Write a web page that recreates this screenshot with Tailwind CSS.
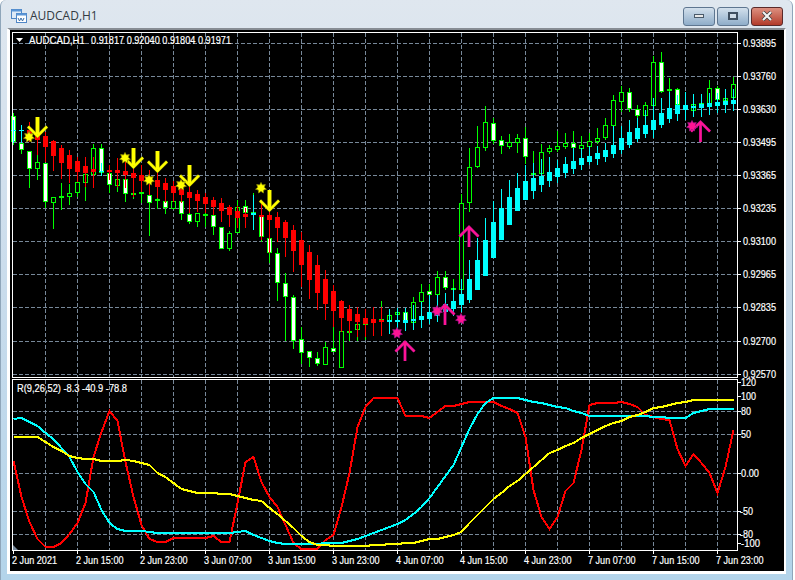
<!DOCTYPE html>
<html lang="en">
<head>
    <meta charset="UTF-8">
    <title>AUDCAD,H1</title>
    <script src="https://cdn.jsdelivr.net/npm/@tailwindcss/browser@4"></script>
</head>
<body class="bg-white overflow-hidden">
    <div class="w-[793px] h-[580px] flex flex-col rounded-t-md bg-gradient-to-b from-[#dfe7ef] via-[#c9dcec] to-[#b3d4ea] border-l border-r border-[#8fa6ba]">
        <div class="h-[28px] flex items-center shrink-0 pl-[10px] pt-[4px]">
            <svg width="16" height="16" viewBox="0 0 16 16" class="shrink-0">
                <rect x="0.5" y="1.5" width="10" height="9" fill="#dfeaf6" stroke="#4f86c6"/>
                <rect x="0.5" y="1.5" width="10" height="2" fill="#5b95d6"/>
                <rect x="5.5" y="5.5" width="10" height="9" fill="#ffffff" stroke="#4f86c6"/>
                <rect x="5.5" y="5.5" width="10" height="2" fill="#5b95d6"/>
                <path d="M7 10 l1.5 3 l1.5 -3 l1.5 3 l1.5 -3" fill="none" stroke="#3a6ea8" stroke-width="1"/>
            </svg>
            <span class="ml-[3px] text-[12px] text-[#333a42] font-['Open_Sans',sans-serif]">AUDCAD,H1</span>
            <div class="ml-auto flex gap-[2px] mr-[9px]">
                <div class="w-[32px] h-[19px] rounded-[3px] border border-[#5e7690] bg-gradient-to-b from-[#d3e0ec] to-[#8fadc9] flex items-center justify-center">
                    <div class="w-[10px] h-[4px] bg-[#e8e8e8] border border-[#4a5a6a]"></div>
                </div>
                <div class="w-[32px] h-[19px] rounded-[3px] border border-[#5e7690] bg-gradient-to-b from-[#d3e0ec] to-[#8fadc9] flex items-center justify-center">
                    <div class="w-[10px] h-[8px] border-2 border-[#3f4f60] bg-[#cfdbe6]"></div>
                </div>
                <div class="w-[32px] h-[19px] rounded-[3px] border border-[#5a2a2a] bg-gradient-to-b from-[#dc8f80] to-[#b23a2a] flex items-center justify-center">
                    <svg width="12" height="10" viewBox="0 0 12 10"><path d="M2 1 L10 9 M10 1 L2 9" stroke="#3b3b3b" stroke-width="3.6"/><path d="M2 1 L10 9 M10 1 L2 9" stroke="#f2f2f2" stroke-width="2.2"/></svg>
                </div>
            </div>
        </div>
        <div class="ml-[6px] mr-[6px] border-t-2 border-t-[#878d94] border-l-[3px] border-r-2 border-b-[3px] border-l-white border-r-white border-b-white bg-black shrink-0 w-[779px] h-[546px]">
            <svg id="chart" width="774" height="541" viewBox="10 30 774 541" class="block font-['Liberation_Sans',sans-serif] text-[11px] fill-white"></svg>
        </div>
    </div>
    <script>
        const svg = document.getElementById("chart");
        const NS = "http://www.w3.org/2000/svg";

        function add(tag, attrs, text) {
            const el = document.createElementNS(NS, tag);
            for (const k in attrs) el.setAttribute(k, attrs[k]);
            if (text) el.textContent = text;
            svg.appendChild(el);
            return el;
        }
        function box(x, y, w, h, fill) {
            add("rect", { x: x, y: y, width: w, height: h, fill: fill, "shape-rendering": "crispEdges" });
        }
        function label(x, y, len, str) {
            add("text", { x: x, y: y, textLength: len, lengthAdjust: "spacingAndGlyphs", stroke: "#ffffff", "stroke-width": 0.2 }, str);
        }
        const px = n => 13.5 + 8 * n;

        // grid
        const GRID = "#778899";
        const gridTop = [43, 76, 109, 142, 175, 208, 241, 274, 307, 341, 374];
        const gridLow = [411, 434, 473, 511, 534];
        function hline(y) {
            add("line", { x1: 13, x2: 737, y1: y + 0.5, y2: y + 0.5, stroke: GRID, "stroke-dasharray": "4 2", "shape-rendering": "crispEdges" });
        }
        function vline(x, y1, y2) {
            add("line", { x1: x, x2: x, y1: y1, y2: y2, stroke: GRID, "stroke-dasharray": "4 2", "shape-rendering": "crispEdges" });
        }
        gridTop.forEach(hline);
        gridLow.forEach(hline);
        for (let x = 45.5; x < 737; x += 32) {
            vline(x, 33, 377);
            vline(x, 380, 550);
        }

        // price candles: wick top, wick bottom, body top, body bottom, type (0 hollow, 1 white, 2 doji)
        const candles = [
            [113,145,116,142,1],[142,154,143,150,1],[151,188,151,169,1],[155,180,162,169,0],[163,208,163,202,1],
            [197,229,197,203,0],[183,210,196,198,0],[184,205,193,197,0],[182,197,182,193,0],[174,201,174,183,0],
            [144,175,148,175,0],[144,176,148,173,1],[168,193,173,185,1],[179,192,179,186,0],[179,202,179,194,1],
            [188,199,193,195,2],[168,203,192,194,2],[193,236,195,203,1],[196,209,199,201,2],[199,214,201,208,1],
            [198,209,201,209,0],[199,220,201,214,1],[212,224,214,222,1],[213,227,213,222,0],[193,227,214,216,1],
            [215,235,215,227,1],[227,249,227,249,1],[231,251,233,249,0],[200,233,207,233,0],[200,213,206,213,1],
            [193,230,212,215,1],[214,242,216,237,1],[236,263,238,253,1],[248,301,253,283,1],[273,341,283,297,1],
            [295,349,297,341,1],[327,364,339,353,1],[351,367,351,358,1],[352,366,358,364,1],[342,365,347,365,0],
            [327,352,348,352,1],[331,368,331,368,0],[331,341,331,333,2],[324,341,324,330,0],[310,340,323,325,2],
            [315,336,320,322,2],[301,328,319,322,0],[315,321,315,321,0],[312,320,312,315,0],[312,323,312,323,1],
            [297,323,302,323,0],[284,302,292,302,0],[284,295,291,295,1],[271,295,277,295,0],[271,290,277,288,1],
            [279,300,288,290,2],[194,296,203,290,0],[148,212,167,203,0],[126,168,147,167,0],[106,151,122,148,0],
            [118,144,123,141,1],[136,154,140,146,1],[134,149,142,147,0],[134,153,138,143,0],[127,164,138,157,1],
            [151,199,173,175,2],[144,176,152,174,0],[145,154,148,152,0],[131,152,146,150,0],[133,149,143,147,0],
            [131,150,143,148,1],[136,151,145,149,0],[133,149,141,147,0],[128,144,138,142,0],[118,140,125,138,0],
            [95,128,100,126,0],[86,112,92,102,0],[88,112,92,109,1],[105,118,109,116,1],[102,118,105,116,0],
            [56,108,62,106,0],[52,93,62,92,1],[78,100,89,91,2],[88,106,89,105,1],[100,110,105,107,2],
            [94,113,104,111,0],[100,108,103,105,2],[80,105,88,104,0],[86,102,88,100,1],[92,103,98,101,0],
            [77,100,84,98,0]
        ];
        candles.forEach((c, i) => {
            const x = px(i);
            box(x - 0.5, c[0], 1, c[1] - c[0], "#00ff00");
            if (c[4] === 2) { box(x - 2.5, c[2], 5, 2, "#00ff00"); return; }
            box(x - 2.5, c[2], 5, c[3] - c[2], "#00ff00");
            box(x - 1.5, c[2] + 1, 3, c[3] - c[2] - 2, c[4] === 1 ? "#ffffff" : "#000000");
        });

        // indicator candles: wick top, wick bottom, body top, body bottom
        const trend = [
            [120,143,130,131,"c"],[125,143,130,131,"c"],[122,142,130,140],[128,155,132,140],[132,162,136,147],
            [140,171,141,156],[145,179,148,163],[150,183,155,169],[157,182,161,172],[157,187,166,173],
            [157,188,169,172],[163,176,171,172,"c"],[165,180,170,172],[158,187,170,173],[160,188,171,175],
            [165,197,173,178],[165,192,175,181],[170,195,177,183],[171,198,180,187],[178,203,183,190],
            [181,202,186,193],[180,203,189,195],[187,213,192,198],[190,212,194,201],[193,213,197,204],
            [197,215,200,207],[198,222,203,211],[205,227,207,215],[206,228,211,218],[208,228,214,217],
            [195,230,213,215,"c"],[203,240,215,217],[210,253,215,220],[212,242,217,228],[220,257,222,238],
            [225,272,230,251],[232,287,240,265],[245,299,252,280],[255,310,265,293],[270,320,279,304],
            [285,327,291,311],[300,332,301,318],[305,333,309,321],[307,337,314,322],[309,337,318,324],
            [307,336,319,323],[307,336,320,322],[309,334,320,322,"c"],[308,333,320,322,"c"],[308,331,320,323,"c"],
            [305,330,319,321,"c"],[302,328,316,320,"c"],[295,324,312,319,"c"],[295,322,308,316,"c"],[293,318,304,312,"c"],
            [288,316,301,309,"c"],[279,312,294,305,"c"],[260,303,279,300,"c"],[238,290,260,290,"c"],[218,276,240,276,"c"],
            [201,258,222,258,"c"],[189,240,208,240,"c"],[180,225,197,225,"c"],[173,211,188,211,"c"],[165,200,181,200,"c"],
            [163,199,178,191,"c"],[159,192,176,185,"c"],[157,187,172,181,"c"],[160,183,168,177,"c"],[157,178,164,173,"c"],
            [148,174,161,169,"c"],[148,170,158,165,"c"],[146,165,156,162,"c"],[146,165,153,159,"c"],[143,162,150,157,"c"],
            [126,158,145,154,"c"],[126,154,138,150,"c"],[120,148,132,145,"c"],[118,142,128,139,"c"],[110,138,125,134,"c"],
            [98,138,120,130,"c"],[98,128,113,125,"c"],[92,123,108,119,"c"],[95,121,105,114,"c"],[92,120,105,110,"c"],
            [94,117,106,108,"c"],[94,117,104,108,"c"],[93,115,103,107,"c"],[93,113,102,106,"c"],[89,113,101,105,"c"],
            [89,111,100,104,"c"]
        ];
        trend.forEach((c, i) => {
            const x = px(i);
            const col = c[4] === "c" ? "#00ffff" : "#ff0000";
            box(x - 0.5, c[0], 1, c[1] - c[0], col);
            box(x - 2.5, c[2], 5, Math.max(1, c[3] - c[2]), col);
        });

        function star(cx, cy, r, fill, edge) {
            let pts = "";
            for (let i = 0; i < 14; i++) {
                const a = Math.PI * i / 7 - Math.PI / 2;
                const d = i % 2 ? r * 0.6 : r;
                pts += (cx + d * Math.cos(a)).toFixed(1) + "," + (cy + d * Math.sin(a)).toFixed(1) + " ";
            }
            add("polygon", { points: pts, fill: fill, stroke: edge, "stroke-width": 0.8 });
        }
        function arrowDown(x, y1, y2) {
            const wings = `M${x - 9.5} ${y2 - 10.5} L${x} ${y2 - 1} L${x + 9.5} ${y2 - 10.5}`;
            add("path", { d: wings, fill: "none", stroke: "#8f8f00", "stroke-width": 3.2 });
            add("path", { d: `M${x} ${y1} L${x} ${y2 - 3}`, fill: "none", stroke: "#8f8f00", "stroke-width": 4.2 });
            add("path", { d: wings, fill: "none", stroke: "#ffff00", "stroke-width": 2.4 });
            add("path", { d: `M${x} ${y1} L${x} ${y2 - 3}`, fill: "none", stroke: "#ffff00", "stroke-width": 3.4 });
        }
        function arrowUp(x, y1, y2) {
            const d = `M${x} ${y2} L${x} ${y1 + 2} M${x - 9.5} ${y1 + 10.5} L${x} ${y1 + 1} L${x + 9.5} ${y1 + 10.5}`;
            add("path", { d: d, fill: "none", stroke: "#a01088", "stroke-width": 3 });
            add("path", { d: d, fill: "none", stroke: "#ff1493", "stroke-width": 2.1 });
        }
        [[37.5,117,137],[133.5,148,168],[157.5,151,172],[189.5,165,186],[269.5,190,211]].forEach(a => arrowDown(a[0], a[1], a[2]));
        [[29,137],[125,158],[149,180],[181,185],[261,188]].forEach(s => star(s[0], s[1], 5.5, "#ffff00", "#8f8f00"));
        [[405,341,361],[445,304,325],[469,226,247],[700.5,121,142]].forEach(a => arrowUp(a[0], a[1], a[2]));
        [[397,333],[437,311],[461,319],[692,126]].forEach(s => star(s[0], s[1], 5.5, "#ff1493", "#a01088"));

        // oscillator lines, y values as read from the chart
        const red = [461,497,522,539,547,547,543,534,523,503,457,432,411,421,462,497,525,539,542,542,538,538,538,538,538,536,542,542,503,462,457,482,497,507,525,543,549,549,549,540,535,507,473,427,407,398,398,398,398,416,416,416,418,412,406,406,404,402,402,402,402,406,409,413,437,490,517,529,517,491,483,450,405,403,403,403,402,404,407,415,417,419,420,449,466,454,463,473,493,467,430];
        const cyan = [419,418,422,426,433,439,448,457,472,484,492,510,523,529,531,531,531,532,533,533,533,533,533,533,533,533,533,533,532,531,535,538,541,543,544,544,544,544,544,543,543,543,541,539,536,533,530,527,524,520,514,507,498,487,476,465,447,429,414,403,398,398,398,398,400,402,403,405,407,408,411,413,416,416,416,416,416,416,416,416,417,417,418,418,418,413,411,409,409,409,409];
        const yellow = [437,437,437,437,442,447,451,456,458,459,459,461,461,461,460,461,463,465,473,477,483,489,491,493,493,493,494,494,496,498,500,501,508,514,521,528,536,542,545,545,546,546,546,546,546,545,545,544,544,543,543,541,539,539,537,535,532,523,515,507,499,493,486,481,474,467,460,453,450,446,443,438,434,430,426,423,421,417,415,412,408,407,405,403,402,400,400,400,400,400,400];
        function line(ys, color) {
            add("polyline", { points: ys.map((y, i) => px(i) + "," + y).join(" "), fill: "none", stroke: color, "stroke-width": 2, "shape-rendering": "crispEdges" });
        }
        line(red, "#ff0000");
        line(cyan, "#00ffff");
        line(yellow, "#ffff00");

        // panel borders and axis ticks
        box(12, 32, 1, 346, "#ffffff");
        box(12, 32, 726, 1, "#ffffff");
        box(737, 32, 1, 346, "#ffffff");
        box(12, 377, 726, 1, "#ffffff");
        box(12, 379, 1, 172, "#ffffff");
        box(12, 379, 726, 1, "#ffffff");
        box(737, 379, 1, 172, "#ffffff");
        box(12, 550, 726, 1, "#ffffff");
        add("polygon", { points: "13,545 13,550 18,550", fill: "#778899" });
        add("polygon", { points: "16,38 23,38 19.5,42", fill: "#ffffff" });

        const prices = ["0.93895","0.93760","0.93630","0.93495","0.93365","0.93235","0.93100","0.92965","0.92835","0.92700","0.92570"];
        prices.forEach((p, i) => {
            box(738, gridTop[i], 3, 1, "#ffffff");
            label(743, gridTop[i] + 4, 33, p);
        });
        [[382,741,15,"120"],[396,741,15,"100"],[411,741,10,"80"],[434,741,10,"50"],[473,741,18,"0.00"],[511,740,13,"-50"],[534,740,13,"-80"],[543,741,19,"-100"]].forEach(t => {
            box(738, t[0], 3, 1, "#ffffff");
            label(t[1], t[0] + 4, t[2], t[3]);
        });

        label(29, 44, 56, "AUDCAD,H1");
        label(91, 44, 140, "0.91817 0.92040 0.91804 0.91971");
        label(17, 392, 110, "R(9,26,52) -8.3 -40.9 -78.8");
        ["2 Jun 2021","2 Jun 15:00","2 Jun 23:00","3 Jun 07:00","3 Jun 15:00","3 Jun 23:00","4 Jun 07:00","4 Jun 15:00","4 Jun 23:00","7 Jun 07:00","7 Jun 15:00","7 Jun 23:00"].forEach((t, i) => {
            box(13 + 64 * i, 551, 1, 3, "#ffffff");
            label(12 + 64 * i, 564, i === 0 ? 45 : 47.5, t);
        });
    </script>
</body>
</html>
